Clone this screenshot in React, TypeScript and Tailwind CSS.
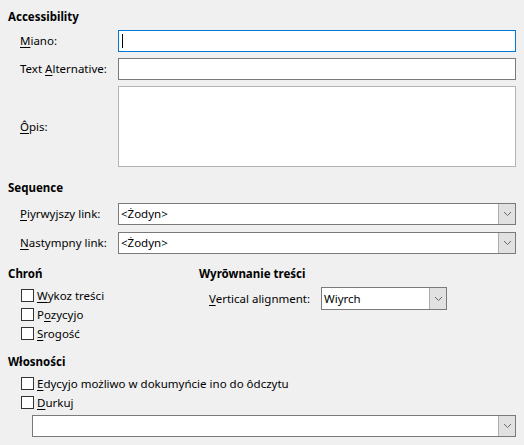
import React from "react";

function Chevron() {
  return (
    <svg width="9" height="6" viewBox="0 0 9 6" className="block">
      <path d="M1 1 L4.5 4.5 L8 1" fill="none" stroke="#6a6a6a" strokeWidth="1" />
    </svg>
  );
}

function Combo({ value, className }: { value: string; className: string }) {
  return (
    <div className={`flex border border-[#7a7a7a] bg-white ${className}`}>
      <div className="flex-1 flex items-center pl-[2px] leading-none whitespace-nowrap">{value}</div>
      <div className="w-[17px] flex items-center justify-center bg-[#e1e1e1] border-l border-[#adadad]">
        <Chevron />
      </div>
    </div>
  );
}

function Check({ children }: { children: React.ReactNode }) {
  return (
    <div className="h-[19px] flex items-center pl-[21px] whitespace-nowrap">
      <div className="w-[13px] h-[13px] border border-[#333333] bg-white mr-[3px]" />
      <span>{children}</span>
    </div>
  );
}

function U({ children }: { children: React.ReactNode }) {
  return <span className="underline underline-offset-[2px] decoration-1">{children}</span>;
}

export default function App() {
  return (
    <div
      className="w-[524px] h-[445px] bg-[#f0f0f0] text-black text-[11.5px] leading-[16px] overflow-hidden"
      style={{ fontFamily: '"Noto Sans", "Open Sans", sans-serif' }}
    >
      <div className="pt-[9px] pl-[8px] font-bold h-[25px]">Accessibility</div>
      <div className="flex flex-col gap-[6px] mt-[5px]">
        <div className="flex items-center">
          <div className="w-[118px] pl-[20px] whitespace-nowrap">
            <U>M</U>iano:
          </div>
          <div className="w-[398px] h-[22px] border border-[#0078d7] bg-white flex items-center pl-[3px]">
            <div className="w-[1px] h-[14px] bg-black" />
          </div>
        </div>
        <div className="flex items-center">
          <div className="w-[118px] pl-[20px] whitespace-nowrap">
            Text <U>A</U>lternative:
          </div>
          <div className="w-[398px] h-[22px] border border-[#7a7a7a] bg-white" />
        </div>
        <div className="flex items-center">
          <div className="w-[118px] pl-[20px] whitespace-nowrap">
            <U>Ô</U>pis:
          </div>
          <div className="w-[398px] h-[81px] border border-[#b4b4b4] bg-white" />
        </div>
      </div>

      <div className="mt-[13px] pl-[8px] font-bold h-[16px]">Sequence</div>
      <div className="flex flex-col gap-[7px] mt-[7px]">
        <div className="flex items-center">
          <div className="w-[118px] pl-[20px] whitespace-nowrap">
            <U>P</U>iyrwyjszy link:
          </div>
          <Combo value="<Żodyn>" className="w-[398px] h-[22px]" />
        </div>
        <div className="flex items-center">
          <div className="w-[118px] pl-[20px] whitespace-nowrap">
            <U>N</U>astympny link:
          </div>
          <Combo value="<Żodyn>" className="w-[398px] h-[22px]" />
        </div>
      </div>

      <div className="flex mt-[12px]">
        <div className="w-[199px] shrink-0">
          <div className="pl-[8px] font-bold h-[16px]">Chroń</div>
          <div className="mt-[4px]">
            <Check>
              <U>W</U>ykoz treści
            </Check>
            <Check>
              P<U>o</U>zycyjo
            </Check>
            <Check>
              <U>S</U>rogość
            </Check>
          </div>
        </div>
        <div className="flex-1">
          <div className="font-bold h-[16px] whitespace-nowrap">Wyrōwnanie treści</div>
          <div className="flex items-center mt-[5px]">
            <div className="w-[122px] pl-[10px] whitespace-nowrap">
              <U>V</U>ertical alignment:
            </div>
            <Combo value="Wiyrch" className="w-[126px] h-[23px]" />
          </div>
        </div>
      </div>

      <div className="mt-[11px] pl-[8px] font-bold h-[16px]">Włosności</div>
      <div className="mt-[4px]">
        <Check>
          <U>E</U>dycyjo możliwo w dokumyńcie ino do ôdczytu
        </Check>
        <Check>
          <U>D</U>urkuj
        </Check>
      </div>
      <div className="pl-[32px] mt-[3px]">
        <Combo value="" className="w-[484px] h-[22px]" />
      </div>
    </div>
  );
}
